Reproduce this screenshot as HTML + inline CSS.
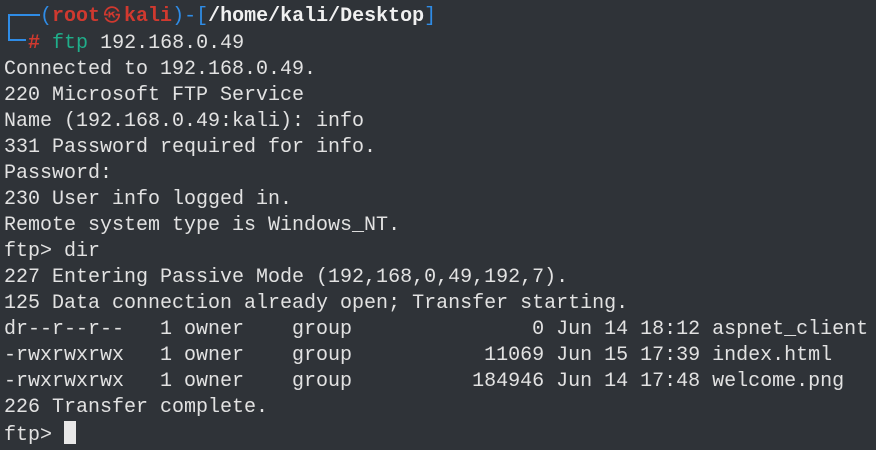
<!DOCTYPE html>
<html><head><meta charset="utf-8"><style>
html,body{margin:0;padding:0;}
body{width:876px;height:450px;background:#2f3338;overflow:hidden;position:relative;}
pre{position:absolute;left:4px;top:4px;margin:0;font-family:"Liberation Mono","DejaVu Sans Mono",monospace;font-size:20px;line-height:26px;color:#e2e2e2;white-space:pre;}
.b{color:#2f8ce6}.r{color:#d0392f;font-weight:bold}.w{color:#f0f0f0;font-weight:bold}.g{color:#1fae8a}
.ln{position:absolute;background:#2f8ce6}
.cur{display:inline-block;width:12px;height:23px;background:#e8e8e8;vertical-align:-4px}
.sym{display:inline-block;width:24px;text-align:center;font-weight:normal;font-size:17px}
</style></head><body>
<div class="ln" style="left:8px;top:14px;width:32px;height:2px"></div>
<div class="ln" style="left:8px;top:14px;width:2px;height:27px"></div>
<div class="ln" style="left:8px;top:39px;width:18px;height:2px"></div>
<pre>   <span class="b">(</span><span class="r">root<span class="sym">㉿</span>kali</span><span class="b">)-[</span><span class="w">/home/kali/Desktop</span><span class="b">]</span>
  <span class="r">#</span> <span class="g">ftp</span> 192.168.0.49
Connected to 192.168.0.49.
220 Microsoft FTP Service
Name (192.168.0.49:kali): info
331 Password required for info.
Password:
230 User info logged in.
Remote system type is Windows_NT.
ftp> dir
227 Entering Passive Mode (192,168,0,49,192,7).
125 Data connection already open; Transfer starting.
dr--r--r--   1 owner    group               0 Jun 14 18:12 aspnet_client
-rwxrwxrwx   1 owner    group           11069 Jun 15 17:39 index.html
-rwxrwxrwx   1 owner    group          184946 Jun 14 17:48 welcome.png
226 Transfer complete.
ftp> <span class="cur"></span></pre>
</body></html>
